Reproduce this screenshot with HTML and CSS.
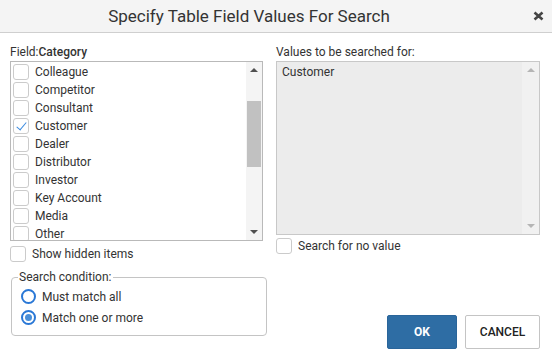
FILE: index.html
```html
<!DOCTYPE html>
<html lang="en">
<head>
    <meta charset="UTF-8">
    <title>Specify Table Field Values For Search</title>
    <link rel="stylesheet" href="styles.css">
</head>
<body>
    <div class="dialog">
        <header class="titlebar">
            <h1>Specify Table Field Values For Search</h1>
            <div class="close-area">
                <button class="close" title="Close">
                    <svg width="11" height="10" viewBox="0 0 11 10">
                        <path d="M1.5 1.5 L9.5 8.5 M9.5 1.5 L1.5 8.5" stroke="#444" stroke-width="2.6" stroke-linecap="butt"/>
                    </svg>
                </button>
            </div>
        </header>

        <div class="content">
            <!-- Lista de valores -->
            <div class="col col-left">
                <div class="field-label">Field:<b>Category</b></div>
                <div class="listbox">
                    <ul class="items">
                        <li><span class="cb"></span>Colleague</li>
                        <li><span class="cb"></span>Competitor</li>
                        <li><span class="cb"></span>Consultant</li>
                        <li><span class="cb checked"></span>Customer</li>
                        <li><span class="cb"></span>Dealer</li>
                        <li><span class="cb"></span>Distributor</li>
                        <li><span class="cb"></span>Investor</li>
                        <li><span class="cb"></span>Key Account</li>
                        <li><span class="cb"></span>Media</li>
                        <li><span class="cb"></span>Other</li>
                    </ul>
                    <div class="scrollbar">
                        <span class="arrow up"></span>
                        <span class="track"><span class="thumb"></span></span>
                        <span class="arrow down"></span>
                    </div>
                </div>
                <label class="check-row hidden-items"><span class="cb"></span>Show hidden items</label>

                <fieldset class="condition">
                    <legend>Search condition:</legend>
                    <label class="radio-row"><span class="radio"></span>Must match all</label>
                    <label class="radio-row"><span class="radio on"></span>Match one or more</label>
                </fieldset>
            </div>

            <!-- Valores selecionados -->
            <div class="col col-right">
                <div class="field-label">Values to be searched for:</div>
                <div class="valuebox">
                    <div class="values">Customer</div>
                    <div class="scrollbar light">
                        <span class="arrow up"></span>
                        <span class="track"></span>
                        <span class="arrow down"></span>
                    </div>
                </div>
                <label class="check-row no-value"><span class="cb"></span>Search for no value</label>

                <div class="buttons">
                    <button class="btn btn-ok">OK</button>
                    <button class="btn btn-cancel">CANCEL</button>
                </div>
            </div>
        </div>
    </div>
</body>
</html>
```

FILE: styles.css
```css
* {
    margin: 0;
    padding: 0;
    box-sizing: border-box;
}

body {
    font-family: 'Roboto', 'Liberation Sans', sans-serif;
    font-size: 12px;
    color: #333;
    background: #fff;
}

.dialog {
    width: 552px;
    height: 364px;
    display: flex;
    flex-direction: column;
    background: #fff;
}

.titlebar {
    height: 33px;
    flex-shrink: 0;
    display: flex;
    align-items: center;
    background: #f4f4f4;
    border-bottom: 1px solid #cfcfcf;
}

.titlebar h1 {
    flex: 1;
    text-align: center;
    font-size: 17px;
    font-weight: 400;
    color: #333;
    line-height: 32px;
}

.close-area {
    width: 54px;
    display: flex;
    justify-content: flex-end;
    padding-right: 8px;
}

.close {
    width: 11px;
    height: 10px;
    border: none;
    background: none;
    display: flex;
    cursor: pointer;
}

.content {
    flex: 1;
    display: flex;
    gap: 10px;
    padding: 11px 12px 15px 10px;
}

.col {
    display: flex;
    flex-direction: column;
}

.col-left {
    width: 256px;
}

.col-right {
    flex: 1;
}

.field-label {
    line-height: 17px;
    height: 17px;
}

.field-label b {
    font-weight: 500;
}

/* lista de categorias */
.listbox {
    width: 253px;
    height: 180px;
    border: 1px solid #b9b9b9;
    display: flex;
    overflow: hidden;
}

.items {
    flex: 1;
    list-style: none;
    padding-top: 1px;
    overflow: hidden;
}

.items li {
    height: 18px;
    display: flex;
    align-items: center;
    padding-left: 2px;
    gap: 6px;
    white-space: nowrap;
}

.cb {
    width: 16px;
    height: 16px;
    flex-shrink: 0;
    border: 1px solid #cbcbcb;
    border-radius: 3px;
    background: #fff;
    position: relative;
}

.cb.checked::after {
    content: '';
    position: absolute;
    left: 5px;
    top: 1px;
    width: 4px;
    height: 9px;
    border-right: 1.5px solid #3b8be0;
    border-bottom: 1.5px solid #3b8be0;
    transform: rotate(40deg);
}

.scrollbar {
    width: 16px;
    display: flex;
    flex-direction: column;
    align-items: center;
    background: #f4f4f4;
}

.scrollbar .arrow {
    height: 16px;
    width: 16px;
    display: flex;
    justify-content: center;
    align-items: center;
}

.scrollbar .arrow::before {
    content: '';
    border-left: 4px solid transparent;
    border-right: 4px solid transparent;
}

.scrollbar .up::before {
    border-bottom: 4px solid #505050;
}

.scrollbar .down::before {
    border-top: 4px solid #505050;
}

.scrollbar .track {
    flex: 1;
    width: 100%;
    padding: 23px 1px 0 1px;
}

.thumb {
    display: block;
    height: 66px;
    background: #c1c1c1;
}

.scrollbar.light {
    width: 17px;
    background: #f1f1f1;
}

.scrollbar.light .up::before {
    border-bottom-color: #b5b5b5;
}

.scrollbar.light .down::before {
    border-top-color: #b5b5b5;
}

.check-row {
    display: flex;
    align-items: center;
    gap: 6px;
    line-height: 16px;
}

.hidden-items {
    margin-top: 5px;
}

/* condição de pesquisa */
.condition {
    margin-top: 7px;
    margin-left: 1px;
    width: 256px;
    border: 1px solid #c4c4c4;
    border-radius: 4px;
    padding: 1px 8px 7px 9px;
}

.condition legend {
    padding: 0 1px;
    margin-left: -3px;
    line-height: 16px;
}

.radio-row {
    display: flex;
    align-items: center;
    gap: 6px;
    height: 21px;
}

.radio {
    width: 15px;
    height: 15px;
    border: 2px solid #2a78d6;
    border-radius: 50%;
    display: flex;
    justify-content: center;
    align-items: center;
}

.radio.on::after {
    content: '';
    width: 7px;
    height: 7px;
    border-radius: 50%;
    background: #4a8fd8;
}

/* valores selecionados */
.valuebox {
    height: 174px;
    border: 1px solid #c8c8c8;
    background: #ececec;
    display: flex;
}

.values {
    flex: 1;
    padding: 2px 5px;
    line-height: 16px;
}

.no-value {
    margin-top: 3px;
}

.buttons {
    margin-top: auto;
    display: flex;
    justify-content: flex-end;
    gap: 8px;
}

.btn {
    height: 34px;
    font-family: 'Roboto', 'Liberation Sans', sans-serif;
    font-size: 12px;
    border-radius: 2px;
    cursor: pointer;
}

.btn-ok {
    width: 70px;
    background: #2e6da4;
    border: 1px solid #2a659a;
    color: #fff;
    font-weight: 700;
}

.btn-cancel {
    width: 75px;
    background: #fff;
    border: 1px solid #c4c4c4;
    color: #222;
    font-weight: 500;
}
```
